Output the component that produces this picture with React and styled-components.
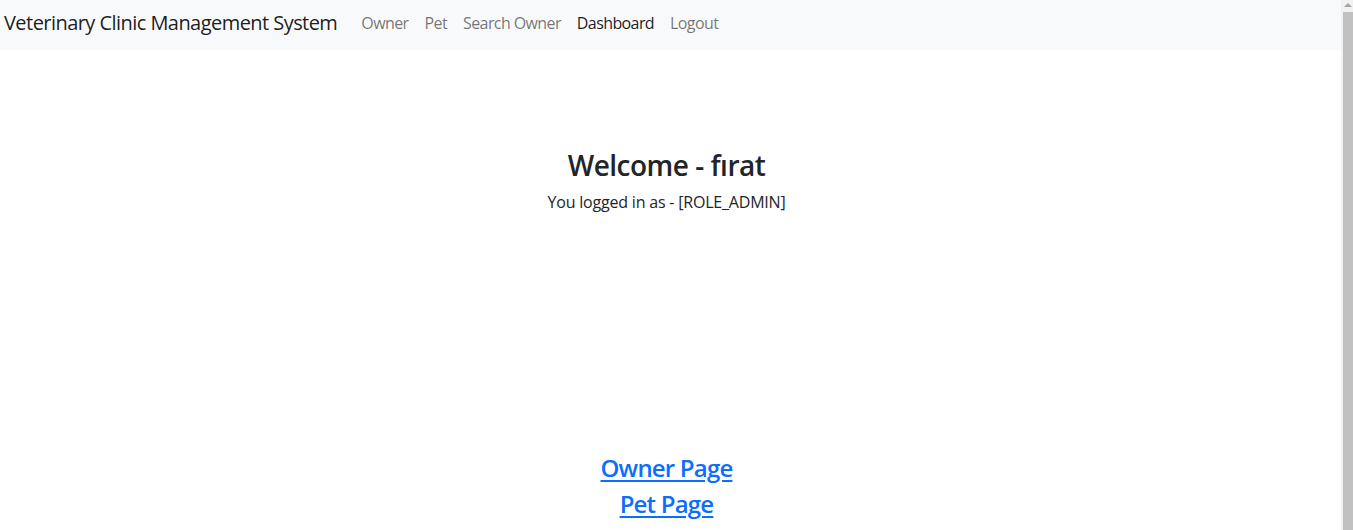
import React from 'react';
import styled, { createGlobalStyle } from 'styled-components';

const GlobalStyle = createGlobalStyle`
  html, body {
    margin: 0;
    padding: 0;
    overflow: hidden;
  }
  body {
    font-family: "Open Sans", "Noto Sans", sans-serif;
    font-size: 16px;
    line-height: 1.5;
    color: #212529;
    background-color: #ffffff;
  }
`;

const Shell = styled.div`
  display: flex;
  height: 100vh;
`;

const Page = styled.div`
  flex: 1;
  min-width: 0;
  overflow: hidden;
`;

// fake classic scrollbar, the screenshot shows one
const ScrollTrack = styled.div`
  display: flex;
  flex-direction: column;
  width: 12px;
  background-color: #f1f1f1;
`;

const ScrollArrow = styled.div`
  display: flex;
  justify-content: center;
  height: 12px;
  padding: 3px 0 0 2px;
  box-sizing: border-box;

  &::before {
    content: '';
    width: 0;
    height: 0;
    border-left: 4px solid transparent;
    border-right: 4px solid transparent;
    border-bottom: 4px solid #a3a3a3;
  }
`;

const ScrollThumb = styled.div`
  flex: 1;
  margin-left: 2px;
  background-color: #c1c1c1;
`;

const Navbar = styled.nav`
  display: flex;
  align-items: center;
  height: 50px;
  padding: 0 4px 4px;
  box-sizing: border-box;
  background-color: #f8f9fa;
`;

const Brand = styled.a`
  margin-right: 16px;
  font-size: 20px;
  line-height: 30px;
  letter-spacing: -0.55px;
  color: rgba(0, 0, 0, 0.9);
  text-decoration: none;
  white-space: nowrap;
`;

const NavList = styled.ul`
  display: flex;
  margin: 0;
  padding: 0;
  list-style: none;
`;

const NavLink = styled.a`
  display: block;
  padding: 0 8px;
  font-size: 16px;
  letter-spacing: -0.6px;
  color: ${({ $active }) => ($active ? 'rgba(0, 0, 0, 0.9)' : 'rgba(0, 0, 0, 0.55)')};
  text-decoration: none;
`;

const Main = styled.main`
  padding-right: 8px;
  text-align: center;
`;

const Welcome = styled.section`
  padding-top: 99px;
`;

const Title = styled.h3`
  margin: 0 0 7px;
  font-size: 28px;
  font-weight: 600;
  line-height: 1.2;
  letter-spacing: -0.5px;
`;

const Subtitle = styled.p`
  margin: 0;
  font-size: 16px;
  letter-spacing: -0.2px;
`;

const Links = styled.div`
  display: flex;
  flex-direction: column;
  align-items: center;
  margin-top: 236px;
`;

const PageLink = styled.a`
  font-size: 24px;
  font-weight: 600;
  line-height: 36.5px;
  letter-spacing: -0.8px;
  color: #0d6efd;
  text-decoration: underline;
  text-decoration-thickness: 2px;
  text-underline-offset: 3px;
`;

const navItems = [
  { label: 'Owner' },
  { label: 'Pet' },
  { label: 'Search Owner' },
  { label: 'Dashboard', active: true },
  { label: 'Logout' },
];

const App = () => (
  <Shell>
    <GlobalStyle />
    <Page>
      <Navbar>
        <Brand href="#">Veterinary Clinic Management System</Brand>
        <NavList>
          {navItems.map((item) => (
            <li key={item.label}>
              <NavLink href="#" $active={item.active}>{item.label}</NavLink>
            </li>
          ))}
        </NavList>
      </Navbar>
      <Main>
        <Welcome>
          <Title>Welcome - fırat</Title>
          <Subtitle>You logged in as - [ROLE_ADMIN]</Subtitle>
        </Welcome>
        <Links>
          <PageLink href="#">Owner Page</PageLink>
          <PageLink href="#">Pet Page</PageLink>
        </Links>
      </Main>
    </Page>
    <ScrollTrack>
      <ScrollArrow />
      <ScrollThumb />
    </ScrollTrack>
  </Shell>
);

export default App;
